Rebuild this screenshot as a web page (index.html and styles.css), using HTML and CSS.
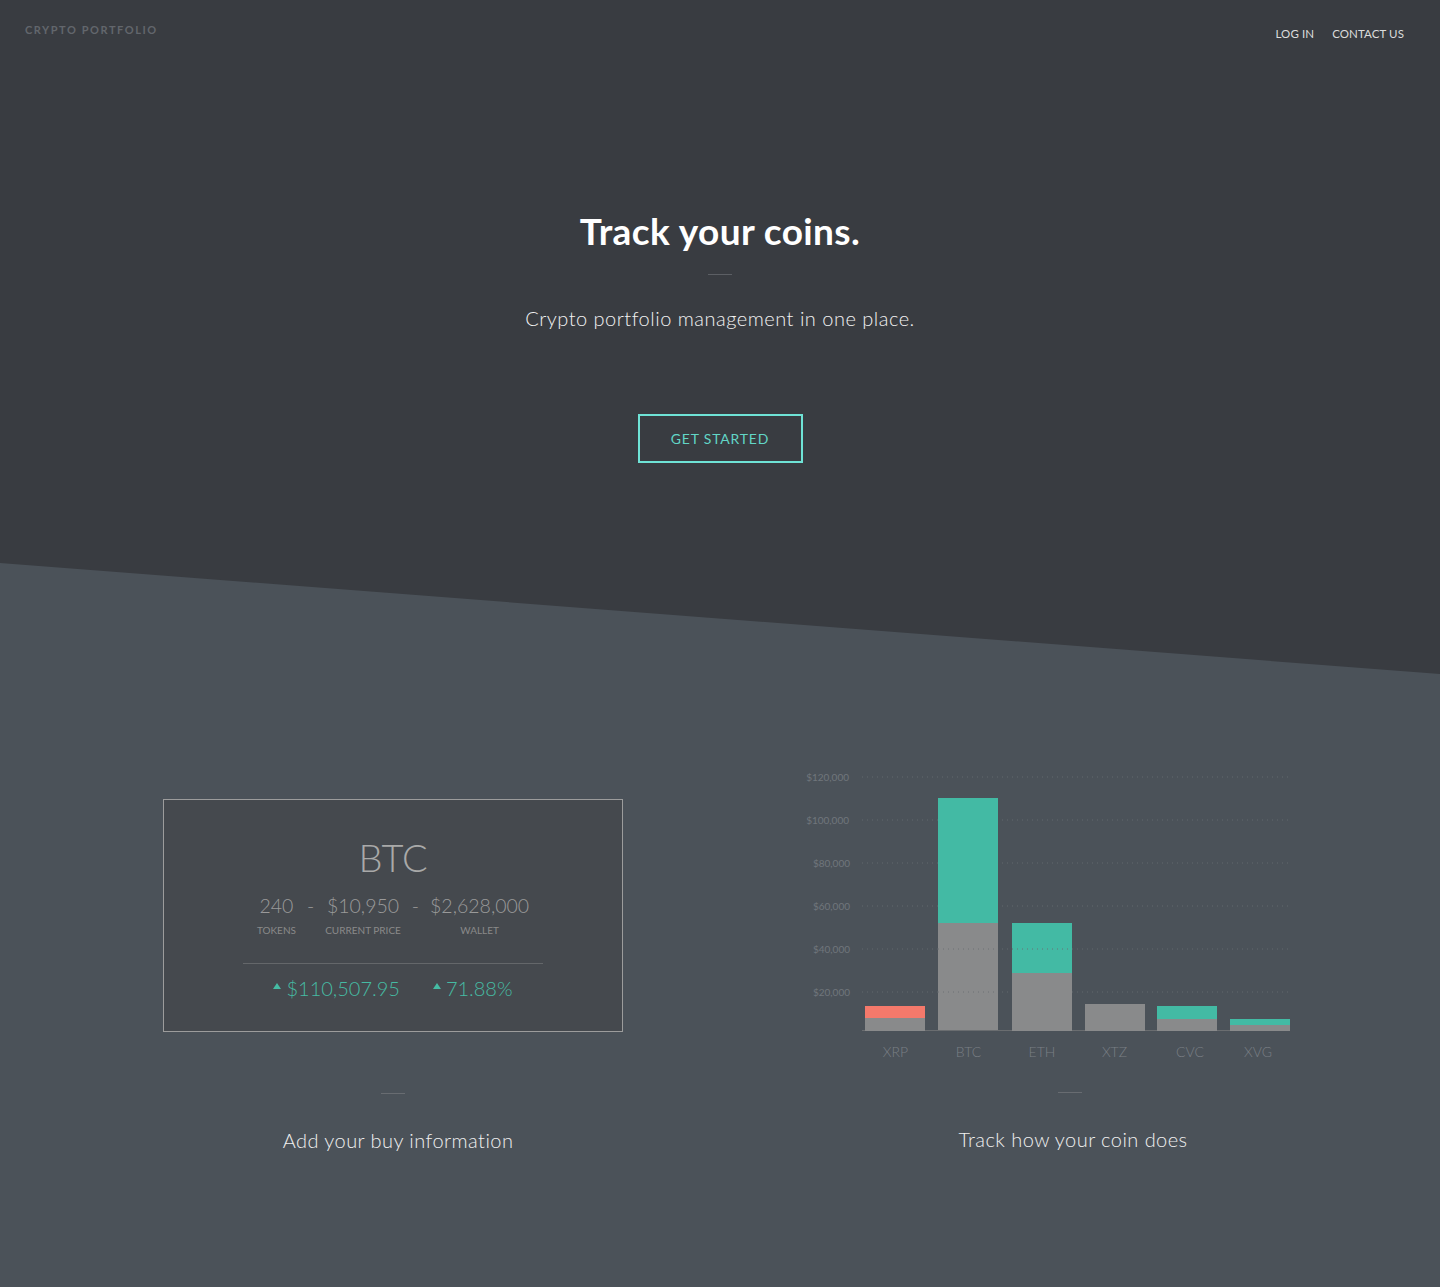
FILE: index.html
```html
<!DOCTYPE html>
<html lang="en">
<head>
<meta charset="utf-8">
<title>Crypto Portfolio</title>
<link rel="stylesheet" href="styles.css">
</head>
<body>
<header class="hero">
  <nav class="topbar">
    <div class="logo">CRYPTO PORTFOLIO</div>
    <div class="nav-links">
      <a href="#" class="nav-link">LOG IN</a>
      <a href="#" class="nav-link">CONTACT US</a>
    </div>
  </nav>
  <div class="hero-body">
    <h1 class="hero-title">Track your coins.</h1>
    <div class="rule"></div>
    <p class="hero-sub">Crypto portfolio management in one place.</p>
    <a href="#" class="cta">GET STARTED</a>
  </div>
</header>

<section class="features">
  <div class="feature">
    <div class="visual">
      <div class="card">
        <div class="card-coin">BTC</div>
        <div class="stats">
          <div class="stat"><span class="stat-val">240</span><span class="stat-lbl">TOKENS</span></div>
          <span class="sep">-</span>
          <div class="stat"><span class="stat-val">$10,950</span><span class="stat-lbl">CURRENT PRICE</span></div>
          <span class="sep">-</span>
          <div class="stat"><span class="stat-val">$2,628,000</span><span class="stat-lbl">WALLET</span></div>
        </div>
        <div class="card-rule"></div>
        <div class="gains">
          <span class="gain"><span class="tri"></span>$110,507.95</span>
          <span class="gain"><span class="tri"></span>71.88%</span>
        </div>
      </div>
    </div>
    <div class="rule rule-dim"></div>
    <p class="caption caption-left">Add your buy information</p>
  </div>

  <div class="feature">
    <div class="visual visual-chart">
      <svg class="chart" width="500" height="300" viewBox="0 0 500 300">
        <g class="ylabels">
          <text x="54" y="15.5">$120,000</text>
          <text x="54" y="58.5">$100,000</text>
          <text x="55" y="101.5">$80,000</text>
          <text x="55" y="144.5">$60,000</text>
          <text x="55" y="187.5">$40,000</text>
          <text x="55" y="230.5">$20,000</text>
        </g>
        <g class="grid">
          <line x1="67" x2="495" y1="12" y2="12"/>
          <line x1="67" x2="495" y1="55" y2="55"/>
          <line x1="67" x2="495" y1="98" y2="98"/>
          <line x1="67" x2="495" y1="141" y2="141"/>
          <line x1="67" x2="495" y1="184" y2="184"/>
          <line x1="67" x2="495" y1="227" y2="227"/>
        </g>
        <line class="baseline" x1="67" x2="495" y1="265.5" y2="265.5"/>
        <g class="bars">
          <rect class="loss" x="70" y="241" width="60" height="12"/>
          <rect class="base" x="70" y="253" width="60" height="13"/>
          <rect class="gainbar" x="143" y="33" width="60" height="125"/>
          <rect class="base" x="143" y="158" width="60" height="107"/>
          <rect class="gainbar" x="217" y="158" width="60" height="50"/>
          <rect class="base" x="217" y="208" width="60" height="58"/>
          <rect class="base" x="290" y="239" width="60" height="27"/>
          <rect class="gainbar" x="362" y="241" width="60" height="13"/>
          <rect class="base" x="362" y="254" width="60" height="12"/>
          <rect class="gainbar" x="435" y="254" width="60" height="6"/>
          <rect class="base" x="435" y="260" width="60" height="6"/>
        </g>
        <g class="grid-over">
          <line x1="143" x2="203" y1="184" y2="184"/>
          <line x1="143" x2="203" y1="227" y2="227"/>
          <line x1="217" x2="277" y1="184" y2="184"/>
        </g>
        <g class="xlabels">
          <text x="100.5" y="292">XRP</text>
          <text x="173.5" y="292">BTC</text>
          <text x="247" y="292">ETH</text>
          <text x="319.5" y="292">XTZ</text>
          <text x="395" y="292">CVC</text>
          <text x="463" y="292">XVG</text>
        </g>
      </svg>
    </div>
    <div class="rule rule-dim rule-right"></div>
    <p class="caption caption-right">Track how your coin does</p>
  </div>
</section>
</body>
</html>
```

FILE: styles.css
```css
* { box-sizing: border-box; }

html, body {
  margin: 0;
  padding: 0;
}

body {
  background: #4b5259;
  font-family: Lato, "Noto Sans", "Liberation Sans", sans-serif;
  color: #fff;
  min-height: 1287px;
}

.hero {
  height: 674px;
  background: #393c41;
  clip-path: polygon(0 0, 100% 0, 100% 674px, 0 563px);
}

.topbar {
  display: flex;
  justify-content: space-between;
  align-items: flex-start;
  padding: 23px 36px 0 25px;
}

.logo {
  font-size: 11px;
  font-weight: 700;
  letter-spacing: 1.55px;
  color: #62666c;
  line-height: 14px;
}

.nav-links {
  display: flex;
  gap: 18px;
  padding-top: 4px;
}

.nav-link {
  color: #dcdcdc;
  text-decoration: none;
  font-size: 11.5px;
  font-weight: 400;
  line-height: 14px;
  letter-spacing: 0.1px;
}

.hero-body {
  display: flex;
  flex-direction: column;
  align-items: center;
  padding-top: 168px;
}

.hero-title {
  margin: 0;
  font-size: 37px;
  font-weight: 700;
  line-height: 44px;
  color: #fff;
  letter-spacing: 0.4px;
}

.rule {
  width: 24px;
  height: 1px;
  background: #5c5f64;
}

.hero-title + .rule {
  margin-top: 21px;
}

.hero-sub {
  margin: 31px 0 0;
  font-size: 20px;
  font-weight: 300;
  line-height: 24px;
  color: #f2f2f2;
  letter-spacing: 0.5px;
}

.cta {
  margin-top: 84px;
  width: 165px;
  height: 49px;
  border: 2px solid #6fe3d6;
  display: flex;
  align-items: center;
  justify-content: center;
  color: #62d6c6;
  text-decoration: none;
  font-size: 14px;
  letter-spacing: 0.8px;
}

.features {
  display: grid;
  grid-template-columns: 660px 660px;
  column-gap: 17px;
  padding: 91px 0 0 63px;
}

.feature {
  display: flex;
  flex-direction: column;
  align-items: center;
}

.visual {
  height: 300px;
  width: 100%;
  display: flex;
  align-items: center;
  justify-content: center;
}

.card {
  width: 460px;
  height: 233px;
  background: #45494e;
  border: 1px solid #9c9c9c;
  display: flex;
  flex-direction: column;
  align-items: center;
  padding-top: 36px;
}

.card-coin {
  font-size: 38px;
  font-weight: 300;
  line-height: 42px;
  color: #a9a9a9;
}

.stats {
  display: flex;
  align-items: flex-start;
  gap: 11px;
  margin-top: 16px;
}

.stat {
  display: flex;
  flex-direction: column;
  align-items: center;
}

.stat-val, .sep {
  font-size: 19.5px;
  font-weight: 300;
  line-height: 24px;
  color: #9a9a9a;
}

.stat-lbl {
  font-size: 10px;
  line-height: 12px;
  margin-top: 6px;
  color: #8a8a8a;
}

.card-rule {
  width: 300px;
  height: 1px;
  background: #64676a;
  margin-top: 27px;
}

.gains {
  display: flex;
  gap: 33px;
  margin-top: 12px;
}

.gain {
  display: flex;
  align-items: center;
  font-size: 20px;
  font-weight: 300;
  line-height: 24px;
  color: #45bba3;
}

.tri {
  width: 0;
  height: 0;
  border-left: 4px solid transparent;
  border-right: 4px solid transparent;
  border-bottom: 6px solid #45bba3;
  margin-right: 5px;
  margin-top: -3px;
}

.visual-chart {
  justify-content: center;
}

.chart {
  display: block;
  margin-right: 50px;
  overflow: visible;
}

.ylabels text {
  font-family: Lato, "Noto Sans", sans-serif;
  font-size: 10px;
  fill: #70767c;
  text-anchor: end;
}

.xlabels text {
  font-family: Lato, "Noto Sans", sans-serif;
  font-size: 14px;
  font-weight: 300;
  fill: #7a7f85;
  text-anchor: middle;
}

.grid line {
  stroke: #62686e;
  stroke-width: 1;
  stroke-dasharray: 1 4;
}

.grid-over line {
  stroke: #6d7074;
  stroke-width: 1;
  stroke-dasharray: 1 4;
}

.baseline {
  stroke: #6a6d70;
  stroke-width: 1;
}

.base { fill: #898a8b; }
.gainbar { fill: #43baa4; }
.loss { fill: #f5796b; }

.rule-dim {
  background: #686c71;
  margin-top: 28px;
}

.rule-right {
  margin-top: 27px;
}

.caption {
  margin: 34px 0 0;
  font-size: 20px;
  font-weight: 300;
  line-height: 24px;
  color: #f0f0f0;
  letter-spacing: 0.45px;
}

.caption-left {
  margin-left: 10px;
}

.caption-right {
  margin-top: 34px;
  margin-left: 6px;
}
```
